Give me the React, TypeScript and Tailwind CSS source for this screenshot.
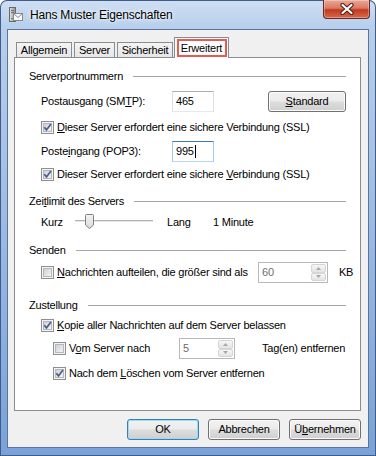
import { useId } from "react";

const font = "font-['Liberation_Sans',Arial,sans-serif]";

function U({ children }: { children: React.ReactNode }) {
  return <span className="underline underline-offset-[1px]">{children}</span>;
}

function Check({ checked }: { checked?: boolean }) {
  const id = "g" + useId().replace(/[^a-zA-Z0-9]/g, "");
  return (
    <svg width={13} height={13} viewBox="0 0 13 13" className="shrink-0">
      <defs>
        <linearGradient id={id} x1="0" y1="0" x2="1" y2="1">
          <stop offset="0" stopColor="#c9cdd3" />
          <stop offset="1" stopColor="#f7f7f7" />
        </linearGradient>
      </defs>
      <rect x="0.5" y="0.5" width="12" height="12" fill="#f4f4f4" stroke="#8f8f8f" />
      <rect x="2.5" y="2.5" width="8" height="8" fill={`url(#${id})`} stroke="#b3b8be" />
      {checked && (
        <path d="M3.3 6.2 L5.5 8.9 L9.9 3.1" fill="none" stroke="#4a5d88" strokeWidth="1.7" />
      )}
    </svg>
  );
}

function Header({ title, className }: { title: React.ReactNode; className: string }) {
  return (
    <div className={`flex h-[16px] items-center pl-[14px] pr-[14px] ${className}`}>
      <span>{title}</span>
      <div className="ml-[10px] h-px flex-1 bg-[#a5a5a5]" />
    </div>
  );
}

function Btn({
  children,
  focused,
  className,
}: {
  children: React.ReactNode;
  focused?: boolean;
  className: string;
}) {
  return (
    <div
      className={`flex h-[21px] items-center justify-center rounded-[3px] border bg-[linear-gradient(#f2f2f2_0%,#ebebeb_48%,#dddddd_52%,#cfcfcf_100%)] ${
        focused
          ? "border-[#3c7fb1] shadow-[inset_0_0_0_1px_#97dcf7]"
          : "border-[#707070] shadow-[inset_0_0_0_1px_#fbfbfb]"
      } ${className}`}
    >
      {children}
    </div>
  );
}

function Arrow({ up }: { up?: boolean }) {
  return (
    <div className="flex h-[9px] items-center justify-center rounded-[2px] border border-[#d6d6d6] bg-[linear-gradient(#f6f6f6,#e4e4e4)]">
      <svg width={5} height={3} viewBox="0 0 5 3">
        <path d={up ? "M0 3 L2.5 0 L5 3 Z" : "M0 0 L2.5 3 L5 0 Z"} fill="#a7a7a7" />
      </svg>
    </div>
  );
}

function Spin({ value, className }: { value: string; className: string }) {
  return (
    <div className={`flex h-[21px] border border-[#b5b8bc] bg-white ${className}`}>
      <div className="flex flex-1 items-center pl-[3px] text-[#6d6d6d]">{value}</div>
      <div className="my-px mr-px flex w-[15px] flex-col justify-between">
        <Arrow up />
        <Arrow />
      </div>
    </div>
  );
}

function Tab({ label, className }: { label: string; className: string }) {
  return (
    <div
      className={`flex h-[15px] items-center justify-center border border-b-0 border-[#898c95] bg-[linear-gradient(#f4f4f4,#e6e6e6)] pt-px ${className}`}
    >
      {label}
    </div>
  );
}

function AppIcon() {
  return (
    <svg width={15} height={15} viewBox="0 0 15 15">
      <defs>
        <linearGradient id="tower" x1="0" y1="0" x2="1" y2="0">
          <stop offset="0" stopColor="#e6e6e6" />
          <stop offset="1" stopColor="#8c8c8c" />
        </linearGradient>
      </defs>
      <rect x="1.5" y="0.5" width="6" height="14" fill="url(#tower)" stroke="#6a6a6a" />
      <rect x="3" y="3" width="3" height="1" fill="#707070" />
      <rect x="3" y="5" width="3" height="1" fill="#707070" />
      <rect x="3" y="11" width="2" height="1.5" fill="#4fb34a" />
      <rect x="5.5" y="6.5" width="9" height="7" fill="#f8f8f8" stroke="#8a8a8a" />
      <path d="M5.5 6.5 L10 10.5 L14.5 6.5" fill="none" stroke="#8a8a8a" />
    </svg>
  );
}

export default function App() {
  return (
    <div
      className={`${font} flex h-[456px] w-[376px] flex-col rounded-t-[7px] bg-[linear-gradient(#cfdff3_0%,#b7cfec_6%,#a2bfe5_40%,#7aa2d8_100%)] text-[11px] leading-none tracking-[-0.22px] text-black shadow-[inset_0_0_0_1px_#3f5d88]`}
    >
      <div className="flex h-[29px] shrink-0 items-start">
        <div className="ml-[8px] mt-[7px]">
          <AppIcon />
        </div>
        <div className="ml-[7px] mt-[9px] text-[12px] tracking-[-0.2px] [text-shadow:0_0_6px_#ffffff,0_0_3px_#ffffff]">
          Hans Muster Eigenschaften
        </div>
        <div className="flex-1" />
        <div className="mr-[6px] flex h-[19px] w-[47px] items-center justify-center rounded-b-[4px] border border-t-0 border-[#6a2a20] bg-[linear-gradient(#eaa896_0%,#d97b64_45%,#c3391f_55%,#d86a4c_100%)] shadow-[inset_0_0_0_1px_rgba(255,255,255,0.3)]">
          <svg width={14} height={12} viewBox="0 0 14 12">
            <path d="M2.5 2 L11.5 10 M11.5 2 L2.5 10" stroke="#4a1e16" strokeWidth="4.2" strokeLinecap="round" />
            <path d="M2.5 2 L11.5 10 M11.5 2 L2.5 10" stroke="#ffffff" strokeWidth="2.2" strokeLinecap="round" />
          </svg>
        </div>
      </div>

      <div className="mx-[7px] mb-[8px] flex flex-1 flex-col border border-[#5b7497] bg-[#f0f0f0]">
        <div className="ml-[6px] mr-[7px] mt-[7px]">
          <div className="flex h-[20px] items-end pl-[2px]">
            <Tab label="Allgemein" className="w-[56px]" />
            <Tab label="Server" className="ml-[2px] w-[41px]" />
            <Tab label="Sicherheit" className="ml-[2px] w-[56px]" />
            <div className="relative z-10 mb-[-1px] ml-px flex h-[21px] w-[55px] items-start justify-center border border-b-0 border-[#898c95] bg-white pt-[5px]">
              Erweitert
              <div className="absolute bottom-px left-[2px] right-px top-[1px] border-2 border-[#e35a57]" />
            </div>
          </div>

          <div className="flex h-[354px] flex-col border border-[#898c95] bg-white">
            <Header title="Serverportnummern" className="mt-[10px]" />
            <div className="mt-[7px] flex h-[21px] items-center pl-[26px]">
              <span className="w-[131px]">
                Postausgang (SM<U>T</U>P):
              </span>
              <div className="flex h-[21px] w-[42px] items-center border border-[#dbdfe6] border-t-[#abadb3] border-b-[#e3e9ef] pl-[3px]">
                465
              </div>
              <Btn className="ml-[54px] w-[78px]">
                <span>
                  <U>S</U>tandard
                </span>
              </Btn>
            </div>
            <div className="mt-[7px] flex h-[16px] items-center gap-[3px] pl-[26px]">
              <Check checked />
              <span>
                <U>D</U>ieser Server erfordert eine sichere Verbindung (SSL)
              </span>
            </div>
            <div className="mt-[6px] flex h-[21px] items-center pl-[26px]">
              <span className="w-[131px]">
                Poste<U>i</U>ngang (POP3):
              </span>
              <div className="flex h-[21px] w-[42px] items-center border border-[#a4c9e3] border-t-[#3d7bad] border-b-[#b7d9ed] pl-[3px]">
                995
                <span className="ml-px h-[13px] w-px bg-black" />
              </div>
            </div>
            <div className="mt-[4px] flex h-[16px] items-center gap-[3px] pl-[26px]">
              <Check checked />
              <span>
                Dieser Server erfordert eine sichere <U>V</U>erbindung (SSL)
              </span>
            </div>

            <Header
              title={
                <>
                  Zei<U>t</U>limit des Servers
                </>
              }
              className="mt-[11px]"
            />
            <div className="mt-[4px] flex h-[18px] items-center pl-[26px]">
              <span className="w-[34px]">Kurz</span>
              <div className="relative h-[18px] w-[78px]">
                <div className="absolute left-0 right-0 top-[7px] h-[1px] bg-[#b3b3b3]" />
                <div className="absolute left-0 right-0 top-[8px] h-[1px] bg-[#e6e6e6]" />
                <svg width={9} height={15} viewBox="0 0 9 15" className="absolute left-[10px] top-[1px]">
                  <defs>
                    <linearGradient id="thumb" x1="0" y1="0" x2="0" y2="1">
                      <stop offset="0" stopColor="#f4f4f4" />
                      <stop offset="1" stopColor="#d9d9d9" />
                    </linearGradient>
                  </defs>
                  <path d="M1.5 0.5 H7.5 Q8.5 0.5 8.5 1.5 V11 L4.5 14.5 L0.5 11 V1.5 Q0.5 0.5 1.5 0.5 Z" fill="url(#thumb)" stroke="#7f7f7f" />
                </svg>
              </div>
              <span className="ml-[14px] w-[46px]">Lang</span>
              <span>1 Minute</span>
            </div>

            <Header title="Senden" className="mt-[11px]" />
            <div className="mt-[4px] flex h-[21px] items-center pl-[26px]">
              <Check />
              <span className="ml-[3px] w-[201px]">
                <U>N</U>achrichten aufteilen, die größer sind als
              </span>
              <Spin value="60" className="w-[70px]" />
              <span className="ml-[11px]">KB</span>
            </div>

            <Header title="Zustellung" className="mt-[14px]" />
            <div className="mt-[4px] flex h-[16px] items-center gap-[3px] pl-[26px]">
              <Check checked />
              <span>
                <U>K</U>opie aller Nachrichten auf dem Server belassen
              </span>
            </div>
            <div className="mt-[5px] flex h-[21px] items-center pl-[38px]">
              <Check />
              <span className="ml-[3px] w-[110px]">
                V<U>o</U>m Server nach
              </span>
              <Spin value="5" className="w-[56px]" />
              <span className="ml-[27px]">Tag(en) entfernen</span>
            </div>
            <div className="mt-[6px] flex h-[16px] items-center gap-[3px] pl-[38px]">
              <Check checked />
              <span>
                Nach dem <U>L</U>öschen vom Server entfernen
              </span>
            </div>
          </div>

          <div className="mt-[8px] flex justify-end">
            <Btn focused className="w-[72px]">
              OK
            </Btn>
            <Btn className="ml-[9px] w-[72px]">Abbrechen</Btn>
            <Btn className="ml-[9px] w-[72px]">
              <span>
                Ü<U>b</U>ernehmen
              </span>
            </Btn>
          </div>
        </div>
      </div>
    </div>
  );
}
